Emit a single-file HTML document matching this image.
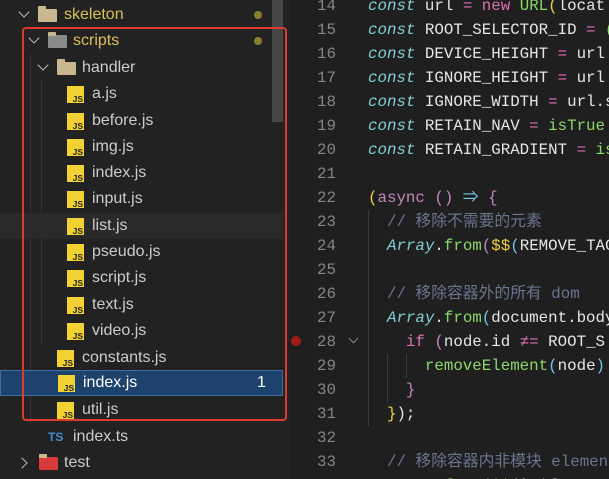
<!DOCTYPE html>
<html><head><meta charset="utf-8"><style>
*{margin:0;padding:0;box-sizing:border-box}
html,body{width:609px;height:479px;overflow:hidden}
body{background:#1f1f1f;position:relative;font-family:"Liberation Sans","Noto Sans CJK SC",sans-serif}
.side{position:absolute;left:0;top:0;width:290px;height:479px;background:#222222}
.row{position:absolute;left:0;width:283px;height:26px;color:#cccccc;font-size:16px;line-height:26px}
.row span.t{position:absolute;top:0}
.js{position:absolute;width:17px;height:17px;background:#f2d233;top:5px}
.js:after{content:"JS";position:absolute;right:1px;bottom:-1px;font:bold 8.5px "Liberation Sans",sans-serif;color:#222;line-height:10px}
.chev{position:absolute;top:7px;width:8px;height:8px;border-right:1.5px solid #bbb;border-bottom:1.5px solid #bbb}
.down{transform:rotate(45deg)}
.folder{position:absolute;top:7px;width:19px;height:13px;background:#c9b88f;border-radius:1px}
.folder:before{content:"";position:absolute;left:0;top:-3px;width:8px;height:4px;background:#c9b88f;border-radius:1px 1px 0 0}
.code{position:absolute;left:290px;top:3px;width:319px;height:479px;font-family:"Liberation Mono","Noto Sans CJK SC",monospace;font-size:15.8px}
.ln{position:absolute;left:0;width:46px;text-align:right;color:#858585;height:24px;line-height:24px}
.cl{position:absolute;left:78px;white-space:pre;color:#e6e6e6;height:24px;line-height:24px}
.k{color:#7fcfd6;font-style:italic}.p{color:#e06fb3}.g{color:#8bd86a}.y{color:#f0d048}.c{color:#6a7590}.m{color:#c586c0}.b{color:#71c6ea}
.guide{position:absolute;width:1px;background:#3a3a3a}
</style></head><body>
<div class="side">
 <div style="position:absolute;left:272px;top:0;width:11px;height:122px;background:#474747"></div>
 <div class="guide" style="left:30px;top:54px;height:370px;background:#333"></div>
 <div class="guide" style="left:41px;top:80px;height:263px;background:#333"></div>
 <div class="row" style="top:2px"><i class="chev down" style="left:20px;top:6px"></i><i class="folder" style="left:38px"></i><span class="t" style="left:64px;color:#d9c05a">skeleton</span><i style="position:absolute;left:254px;top:9px;width:8px;height:8px;border-radius:50%;background:#8a7f2c"></i></div>
 <div class="row" style="top:28px"><i class="chev down" style="left:30px;top:6px"></i><i class="folder" style="left:48px;background:#8a8a8a"></i><span class="t" style="left:73px;color:#d9c05a">scripts</span><i style="position:absolute;left:254px;top:9px;width:8px;height:8px;border-radius:50%;background:#8a7f2c"></i></div>
 <div class="row" style="top:55px"><i class="chev down" style="left:39px;top:6px"></i><i class="folder" style="left:57px"></i><span class="t" style="left:82px">handler</span></div>
 <div class="row" style="top:81px"><i class="js" style="left:67px"></i><span class="t" style="left:92px">a.js</span></div>
 <div class="row" style="top:108px"><i class="js" style="left:67px"></i><span class="t" style="left:92px">before.js</span></div>
 <div class="row" style="top:134px"><i class="js" style="left:67px"></i><span class="t" style="left:92px">img.js</span></div>
 <div class="row" style="top:160px"><i class="js" style="left:67px"></i><span class="t" style="left:92px">index.js</span></div>
 <div class="row" style="top:186px"><i class="js" style="left:67px"></i><span class="t" style="left:92px">input.js</span></div>
 <div class="row" style="top:213px;background:#2a2a2a"><i class="js" style="left:67px"></i><span class="t" style="left:92px">list.js</span></div>
 <div class="row" style="top:239px"><i class="js" style="left:67px"></i><span class="t" style="left:92px">pseudo.js</span></div>
 <div class="row" style="top:265px"><i class="js" style="left:67px"></i><span class="t" style="left:92px">script.js</span></div>
 <div class="row" style="top:292px"><i class="js" style="left:67px"></i><span class="t" style="left:92px">text.js</span></div>
 <div class="row" style="top:318px"><i class="js" style="left:67px"></i><span class="t" style="left:92px">video.js</span></div>
 <div class="row" style="top:345px"><i class="js" style="left:57px"></i><span class="t" style="left:82px">constants.js</span></div>
 <div class="row" style="top:370px;background:#1d426b;border:1px solid #3d6ea3;color:#fff"><i class="js" style="left:57px;top:4px"></i><span class="t" style="left:82px;top:-1px">index.js</span><span class="t" style="left:256px;top:-1px">1</span></div>
 <div class="row" style="top:397px"><i class="js" style="left:57px"></i><span class="t" style="left:82px">util.js</span></div>
 <div class="row" style="top:424px"><span class="t" style="left:48px;color:#3f8fd8;font-weight:bold;font-size:12px">TS</span><span class="t" style="left:73px">index.ts</span></div>
 <div class="row" style="top:450px"><i class="chev" style="left:18px;top:9px;transform:rotate(-45deg)"></i><i class="folder" style="left:39px;background:#d83a3a"></i><span class="t" style="left:64px">test</span></div>
 <div style="position:absolute;left:22px;top:27px;width:265px;height:394px;border:2.5px solid #dc3b30;border-radius:4px"></div>
</div>
<div class="code">
 <div class="guide" style="left:78px;top:207px;height:216px"></div>
 <div class="guide" style="left:97px;top:351px;height:48px"></div>
 <div class="guide" style="left:116px;top:351px;height:24px"></div>
 <div style="position:absolute;left:1px;top:333px;width:10px;height:10px;border-radius:50%;background:#a01a1a"></div>
 <i style="position:absolute;left:60px;top:332px;width:7px;height:7px;border-right:1.3px solid #888;border-bottom:1.3px solid #888;transform:rotate(45deg)"></i>
 <div class="ln" style="top:-9px">14</div><div class="cl" style="top:-9px"><span class="k">const</span> url <span class="p">=</span> <span class="p">new</span> <span class="g">URL</span><span class="y">(</span>locat</div>
 <div class="ln" style="top:15px">15</div><div class="cl" style="top:15px"><span class="k">const</span> ROOT_SELECTOR_ID <span class="p">=</span> <span class="g">(</span></div>
 <div class="ln" style="top:39px">16</div><div class="cl" style="top:39px"><span class="k">const</span> DEVICE_HEIGHT <span class="p">=</span> url</div>
 <div class="ln" style="top:63px">17</div><div class="cl" style="top:63px"><span class="k">const</span> IGNORE_HEIGHT <span class="p">=</span> url</div>
 <div class="ln" style="top:87px">18</div><div class="cl" style="top:87px"><span class="k">const</span> IGNORE_WIDTH <span class="p">=</span> url.s</div>
 <div class="ln" style="top:111px">19</div><div class="cl" style="top:111px"><span class="k">const</span> RETAIN_NAV <span class="p">=</span> <span class="g">isTrue</span></div>
 <div class="ln" style="top:135px">20</div><div class="cl" style="top:135px"><span class="k">const</span> RETAIN_GRADIENT <span class="p">=</span> <span class="g">is</span></div>
 <div class="ln" style="top:159px">21</div>
 <div class="ln" style="top:183px">22</div><div class="cl" style="top:183px"><span class="y">(</span><span class="m">async</span> <span class="m">()</span> <span class="b">⇒</span> <span class="m">{</span></div>
 <div class="ln" style="top:207px">23</div><div class="cl" style="top:207px">  <span class="c">// 移除不需要的元素</span></div>
 <div class="ln" style="top:231px">24</div><div class="cl" style="top:231px">  <span class="k">Array</span>.<span class="g">from</span><span class="m">(</span><span class="y">$$</span><span class="b">(</span>REMOVE_TAG</div>
 <div class="ln" style="top:255px">25</div>
 <div class="ln" style="top:279px">26</div><div class="cl" style="top:279px">  <span class="c">// 移除容器外的所有 dom</span></div>
 <div class="ln" style="top:303px">27</div><div class="cl" style="top:303px">  <span class="k">Array</span>.<span class="g">from</span><span class="b">(</span>document.body</div>
 <div class="ln" style="top:327px">28</div><div class="cl" style="top:327px">    <span class="p">if</span> <span class="m">(</span>node.id <span class="p">≠=</span> ROOT_S</div>
 <div class="ln" style="top:351px">29</div><div class="cl" style="top:351px">      <span class="g">removeElement</span><span class="b">(</span>node<span class="b">)</span></div>
 <div class="ln" style="top:375px">30</div><div class="cl" style="top:375px">    <span class="m">}</span></div>
 <div class="ln" style="top:399px">31</div><div class="cl" style="top:399px">  <span class="y">}</span>);</div>
 <div class="ln" style="top:423px">32</div>
 <div class="ln" style="top:447px">33</div><div class="cl" style="top:447px">  <span class="c">// 移除容器内非模块 element</span></div>
 <div class="ln" style="top:471px">34</div><div class="cl" style="top:471px">  <span class="k">Array</span>.<span class="g">from</span><span class="m">(</span><span class="y">$$</span>(`#${ROOT_</div>
</div>
</body></html>
